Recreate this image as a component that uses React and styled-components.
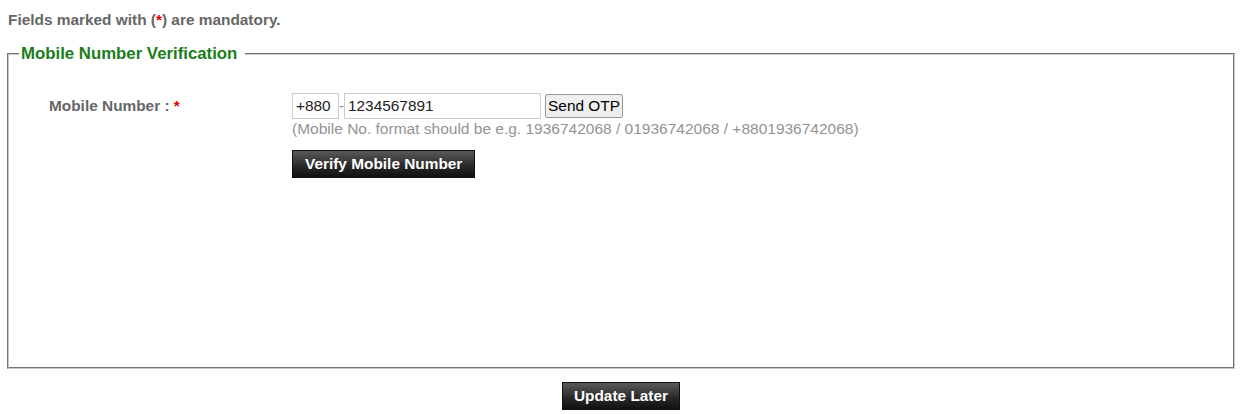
import React, { useState } from "react";
import styled, { createGlobalStyle } from "styled-components";

const GlobalStyle = createGlobalStyle`
   html, body {
      margin: 0;
      padding: 0;
      background: #fff;
   }
   body {
      font-family: "Liberation Sans", Arial, sans-serif;
   }
`;

const Page = styled.div`
   padding: 0 18px 0 7px;
`;

const Notice = styled.p`
   margin: 9px 0 0 1px;
   font-size: 15.4px;
   line-height: 22px;
   font-weight: bold;
   color: #666;
`;

const Star = styled.span`
   color: #d00;
`;

const Box = styled.fieldset`
   margin: 12px 0 0 0;
   padding: 0;
   border: 2px groove #c8c8c8;
   min-height: 322px;
`;

const Legend = styled.legend`
   margin-left: 10px;
   padding: 0 8px 0 2px;
   font-size: 16.8px;
   line-height: 22px;
   font-weight: bold;
   color: #1a7d1a;
`;

const Row = styled.div`
   display: flex;
   align-items: flex-start;
   padding-top: 28px;
`;

const Label = styled.div`
   width: 283px;
   padding-left: 40px;
   box-sizing: border-box;
   font-size: 15.4px;
   line-height: 26px;
   font-weight: bold;
   color: #666;
`;

const Field = styled.div`
   display: flex;
   flex-direction: column;
   align-items: flex-start;
`;

const InputLine = styled.div`
   display: flex;
   align-items: center;
`;

const TextInput = styled.input`
   box-sizing: border-box;
   width: ${(props) => props.w}px;
   height: 26px;
   padding: 0 3px;
   border: 1px solid #ccc;
   border-radius: 0;
   font-family: "Liberation Sans", Arial, sans-serif;
   font-size: 15.4px;
   color: #222;
   outline: none;
`;

const Dash = styled.span`
   width: 5px;
   text-align: center;
   font-size: 14px;
   color: #888;
`;

const OtpButton = styled.button`
   box-sizing: border-box;
   margin-left: 4px;
   width: 78px;
   height: 24px;
   padding: 0;
   border: 1px solid #999;
   border-radius: 2px;
   background: #efefef;
   font-family: "Liberation Sans", Arial, sans-serif;
   font-size: 15.4px;
   color: #000;
   cursor: pointer;
`;

const Hint = styled.div`
   font-size: 15.5px;
   line-height: 19px;
   color: #939393;
`;

const DarkButton = styled.button`
   box-sizing: border-box;
   height: 28px;
   padding: 0 ${(props) => props.pad}px;
   margin-top: ${(props) => props.top}px;
   border: 1px solid #111;
   background: linear-gradient(#5a5a5a, #2a2a2a 55%, #111);
   font-family: "Liberation Sans", Arial, sans-serif;
   font-size: 15.4px;
   font-weight: bold;
   color: #fff;
   cursor: pointer;
`;

const Footer = styled.div`
   display: flex;
   justify-content: center;
   padding-top: 13px;
`;

const App = () => {
   const [code, setCode] = useState("+880");
   const [mobile, setMobile] = useState("1234567891");

   return (
      <Page>
         <GlobalStyle />
         <Notice>
            Fields marked with (<Star>*</Star>) are mandatory.
         </Notice>
         <Box>
            <Legend>Mobile Number Verification</Legend>
            <Row>
               <Label>
                  Mobile Number : <Star>*</Star>
               </Label>
               <Field>
                  <InputLine>
                     <TextInput
                        w={47}
                        value={code}
                        onChange={(e) => setCode(e.target.value)}
                     />
                     <Dash>-</Dash>
                     <TextInput
                        w={197}
                        value={mobile}
                        onChange={(e) => setMobile(e.target.value)}
                     />
                     <OtpButton>Send OTP</OtpButton>
                  </InputLine>
                  <Hint>
                     (Mobile No. format should be e.g. 1936742068 / 01936742068 / +8801936742068)
                  </Hint>
                  <DarkButton pad={12} top={12}>
                     Verify Mobile Number
                  </DarkButton>
               </Field>
            </Row>
         </Box>
         <Footer>
            <DarkButton pad={11} top={0}>
               Update Later
            </DarkButton>
         </Footer>
      </Page>
   );
};

export default App;
